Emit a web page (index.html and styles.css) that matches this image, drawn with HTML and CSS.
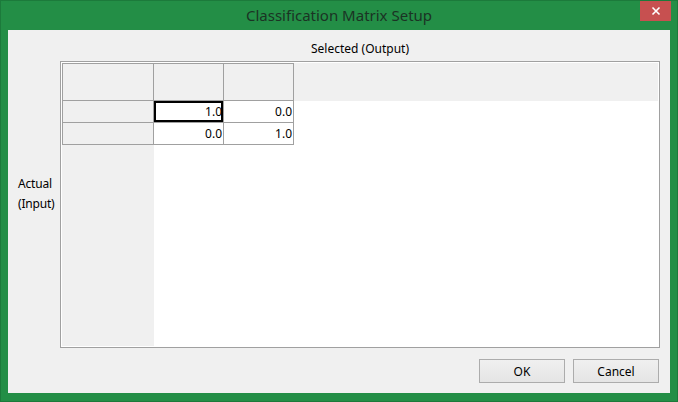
FILE: index.html
```html
<!DOCTYPE html>
<html lang="en">
<head>
  <meta charset="UTF-8">
  <title>Classification Matrix Setup</title>
  <link rel="stylesheet" href="styles.css">
</head>
<body>
  <div class="window">
    <div class="titlebar">
      <span></span>
      <span class="title">Classification Matrix Setup</span>
      <button class="close-btn" title="Close">
        <svg width="10" height="10" viewBox="0 0 10 10">
          <path d="M1.5 1.5 L8.5 8.5 M8.5 1.5 L1.5 8.5" stroke="#fff" stroke-width="1.6" fill="none"/>
        </svg>
      </button>
    </div>

    <div class="dialog-body">
      <div class="axis-top">Selected (Output)</div>
      <div class="axis-side">Actual<br>(Input)</div>

      <div class="matrix">
        <div class="matrix-grid">
          <!-- header row -->
          <div class="hdr corner"></div>
          <div class="hdr col"></div>
          <div class="hdr col"></div>
          <div class="hdr-fill"></div>
          <!-- rows -->
          <div class="rowhdr"></div>
          <div class="cell selected">1.0</div>
          <div class="cell">0.0</div>
          <div class="fill"></div>
          <div class="rowhdr"></div>
          <div class="cell">0.0</div>
          <div class="cell">1.0</div>
          <div class="fill"></div>
          <div class="rowhdr-rest"></div>
        </div>
      </div>

      <div class="buttons">
        <button class="btn">OK</button>
        <button class="btn">Cancel</button>
      </div>
    </div>
  </div>
</body>
</html>
```

FILE: styles.css
```css
* {
  box-sizing: border-box;
}
body {
  margin: 0;
  font-family: 'Noto Sans', 'Open Sans', sans-serif;
  font-size: 12px;
  color: #000;
}
.window {
  width: 678px;
  height: 402px;
  background: #238e46;
  border: 1px solid #1c7a3b;
  display: flex;
  flex-direction: column;
}
.titlebar {
  height: 29px;
  display: grid;
  grid-template-columns: 1fr auto 1fr;
}
.title {
  align-self: center;
  font-size: 15px;
  color: #1b3324;
  margin-top: -1px;
}
.close-btn {
  justify-self: end;
  width: 31px;
  height: 20px;
  margin-right: 6px;
  padding: 0;
  border: none;
  background: #c75050;
  display: flex;
  align-items: center;
  justify-content: center;
}
.dialog-body {
  flex: 1;
  margin: 0 7px 8px 7px;
  background: #f0f0f0;
  padding: 11px 10px 10px 0;
  display: grid;
  grid-template-columns: 52px 1fr;
  grid-template-rows: 16px 1fr 24px;
  row-gap: 0;
}
.axis-top {
  grid-column: 2;
  text-align: center;
  line-height: 16px;
}
.axis-side {
  grid-column: 1;
  grid-row: 2;
  padding-left: 10px;
  margin-top: 117px;
  line-height: 20px;
  letter-spacing: -0.2px;
}
.matrix {
  grid-column: 2;
  grid-row: 2;
  margin: 4px 0 11px 0;
  border: 1px solid #a0a0a0;
  padding: 1px;
  background: #fff;
}
.matrix-grid {
  height: 100%;
  display: grid;
  grid-template-columns: 92px 70px 70px 1fr;
  grid-template-rows: 38px 22px 22px 1fr;
}
.hdr {
  background: #f0f0f0;
  border-top: 1px solid #a0a0a0;
  border-right: 1px solid #a0a0a0;
  border-bottom: 1px solid #a0a0a0;
}
.hdr.corner {
  border-left: 1px solid #a0a0a0;
}
.hdr-fill {
  background: #f0f0f0;
}
.rowhdr {
  background: #f0f0f0;
  border-left: 1px solid #a0a0a0;
  border-right: 1px solid #a0a0a0;
  border-bottom: 1px solid #a0a0a0;
}
.rowhdr-rest {
  background: #f0f0f0;
}
.cell {
  border-right: 1px solid #a0a0a0;
  border-bottom: 1px solid #a0a0a0;
  text-align: right;
  padding-right: 1px;
  line-height: 21px;
}
.cell.selected {
  box-shadow: inset 0 0 0 2px #000;
}
.buttons {
  grid-column: 2;
  grid-row: 3;
  display: flex;
  justify-content: flex-end;
  gap: 8px;
  padding-right: 1px;
}
.btn {
  width: 86px;
  height: 24px;
  font-family: inherit;
  font-size: 12px;
  color: #000;
  border: 1px solid #acacac;
  background: linear-gradient(#f0f0f0, #e5e5e5);
  padding: 0;
}
```
